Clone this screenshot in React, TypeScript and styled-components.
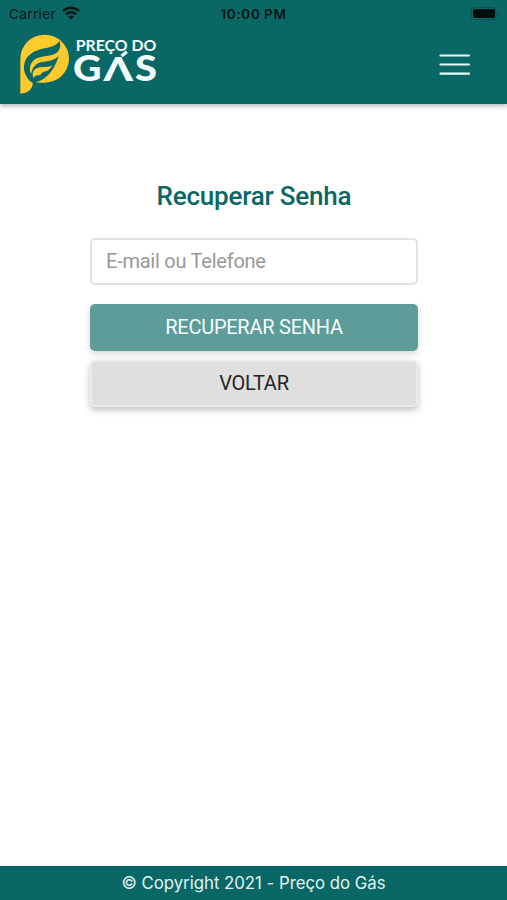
import React from "react";
import styled, { createGlobalStyle } from "styled-components";

const Global = createGlobalStyle`
  * { box-sizing: border-box; }
  body { margin: 0; background: #fff; font-family: Roboto, sans-serif; }
`;
const Page = styled.div`
  height: 900px;
  display: flex;
  flex-direction: column;
  overflow: hidden;
`;
const Header = styled.header`
  height: 103.5px;
  flex: none;
  background: #096866;
  box-shadow: 0 2px 5px rgba(0, 0, 0, 0.3);
`;
const StatusBar = styled.div`
  height: 28px;
  padding: 0 7px 0 9px;
  display: grid;
  grid-template-columns: 1fr auto 1fr;
  align-items: center;
  font-family: Inter, sans-serif;
  font-size: 13.5px;
  color: #061716;
  svg { display: block; }
`;
const Carrier = styled.div`
  display: flex;
  align-items: center;
  gap: 6px;
  letter-spacing: 0.38px;
`;
const Clock = styled.div`
  font-weight: 600;
  font-size: 13.5px;
  letter-spacing: 0.67px;
  margin-left: -1px;
  margin-right: 1px;
  word-spacing: -0.5px;
`;
const Battery = styled.div`
  display: flex;
  justify-content: flex-end;
`;
const NavBar = styled.nav`
  height: 75px;
  padding: 4px 36px 0 18px;
  display: flex;
  justify-content: space-between;
  svg { display: block; }
`;
const MenuButton = styled.button`
  margin-top: 20px;
  width: 34px;
  height: 26px;
  padding: 0;
  border: 0;
  background: none;
`;
const Main = styled.main`
  flex: 1;
  width: 328px;
  margin-left: 90px;
  padding-top: 76.5px;
  display: flex;
  flex-direction: column;
`;
const Title = styled.h1`
  margin: 0 0 26px;
  height: 32px;
  line-height: 32px;
  text-align: center;
  font-size: 26px;
  font-weight: 500;
  letter-spacing: -0.2px;
  color: #0a6764;
`;
const Field = styled.input`
  height: 47px;
  padding: 0 14px 2px;
  margin-bottom: 19px;
  border: 2px solid #e1e3e3;
  border-radius: 5px;
  font: 400 20px Roboto, sans-serif;
  letter-spacing: -0.24px;
  outline: none;
  &::placeholder { color: #989898; opacity: 1; }
`;
const Button = styled.button<{ $primary?: boolean }>`
  height: 47px;
  margin-bottom: 9px;
  padding: 0 0 2px;
  border: ${(p) => (p.$primary ? "0" : "2px solid #ebebeb")};
  border-radius: 5px;
  background: ${(p) => (p.$primary ? "#5d9c99" : "#dfdfdf")};
  color: ${(p) => (p.$primary ? "#f4ffff" : "#242424")};
  font: 400 20px Roboto, sans-serif;
  letter-spacing: -0.25px;
  box-shadow: 0 3px 7px rgba(0, 0, 0, ${(p) => (p.$primary ? 0.16 : 0.25)});
`;
const Footer = styled.footer`
  height: 34px;
  display: flex;
  align-items: center;
  justify-content: center;
  background: #096866;
  color: #e2f3f2;
  font-family: Inter, sans-serif;
  font-size: 16.8px;
  letter-spacing: -0.02px;
`;

const Wifi = () => (
  <svg width="18" height="16" viewBox="0 0 18 16" fill="none" stroke="#061716" strokeWidth="2.5">
    <path d="M.9 5.1C5.5.7 12.5.7 17.1 5.1M3.9 8.3C6.8 5.6 11.2 5.6 14.1 8.3" />
    <path d="M9 13.6 6.2 10.7Q9 8.5 11.8 10.7Z" fill="#061716" stroke="none" />
  </svg>
);
const Logo = () => (
  <svg width="144" height="66" viewBox="18 32 144 66">
    <g transform="translate(16 30) scale(.33333)">
      <path
        fill="#fdca2d"
        d="M13 191V86A73 72 0 1 1 86 158Q68 160 50 154C53 176 36 191 13 191Z"
      />
      <path
        fill="#096866"
        d="M131 32C113 60 72 48 44 72C20 88 20 121 31 138C36 150 43 155 50 158C80 156 112 132 128 78C104 102 72 88 56 108C48 115 49 124 45 131C37 113 45 92 64 84C87 76 118 80 129 60C134 52 133 44 131 32Z"
      />
      <path
        fill="#fdca2d"
        d="M50 136C48 117 66 109 88 111C97 111 104 109 109 106C100 121 94 124 84 125C76 126 78 135 66 136C58 137 55 140 53 145Z"
      />
    </g>
    <g fill="#f3ffff" fontFamily="Lato, sans-serif">
      <text x="75.8" y="51" fontSize="15.8" fontWeight="700" textLength="80.5" lengthAdjust="spacingAndGlyphs">
        PREÇO DO
      </text>
      <g fontSize="36" fontWeight="900">
        <text x="73" y="81.3" textLength="28.5" lengthAdjust="spacingAndGlyphs">G</text>
        <text x="103.5" y="81.3" fontSize="33" textLength="29.5" lengthAdjust="spacingAndGlyphs">Λ</text>
        <text x="135" y="81.3" textLength="22" lengthAdjust="spacingAndGlyphs">S</text>
      </g>
      <path d="M121.500 56 126.800 51.800" stroke="#f3ffff" strokeWidth="3.200" />
    </g>
  </svg>
);

export default function App() {
  return (
    <Page>
      <Global />
      <Header>
        <StatusBar>
          <Carrier>Carrier <Wifi /></Carrier>
          <Clock>10:00 PM</Clock>
          <Battery>
            <svg width="30" height="16" viewBox="0 0 30 16">
              <rect x="1" y="1.5" width="25" height="12" rx="3.5" fill="none" stroke="#07514f" />
              <rect x="3" y="3" width="22" height="9" rx="2" fill="#000d0d" />
              <path d="M28 6v4q2-2 0-4Z" fill="#07403e" />
            </svg>
          </Battery>
        </StatusBar>
        <NavBar>
          <Logo />
          <MenuButton aria-label="Menu">
            <svg width="34" height="26" viewBox="0 0 34 26">
              <path d="M3.5 3.5h28.500M3.500 12.500h28.500M3.500 21.700h28.500" stroke="#e9fffc" strokeWidth="2.2" strokeLinecap="round" />
            </svg>
          </MenuButton>
        </NavBar>
      </Header>
      <Main>
        <Title>Recuperar Senha</Title>
        <Field placeholder="E-mail ou Telefone" />
        <Button $primary>RECUPERAR SENHA</Button>
        <Button>VOLTAR</Button>
      </Main>
      <Footer>© Copyright 2021 - Preço do Gás</Footer>
    </Page>
  );
}
